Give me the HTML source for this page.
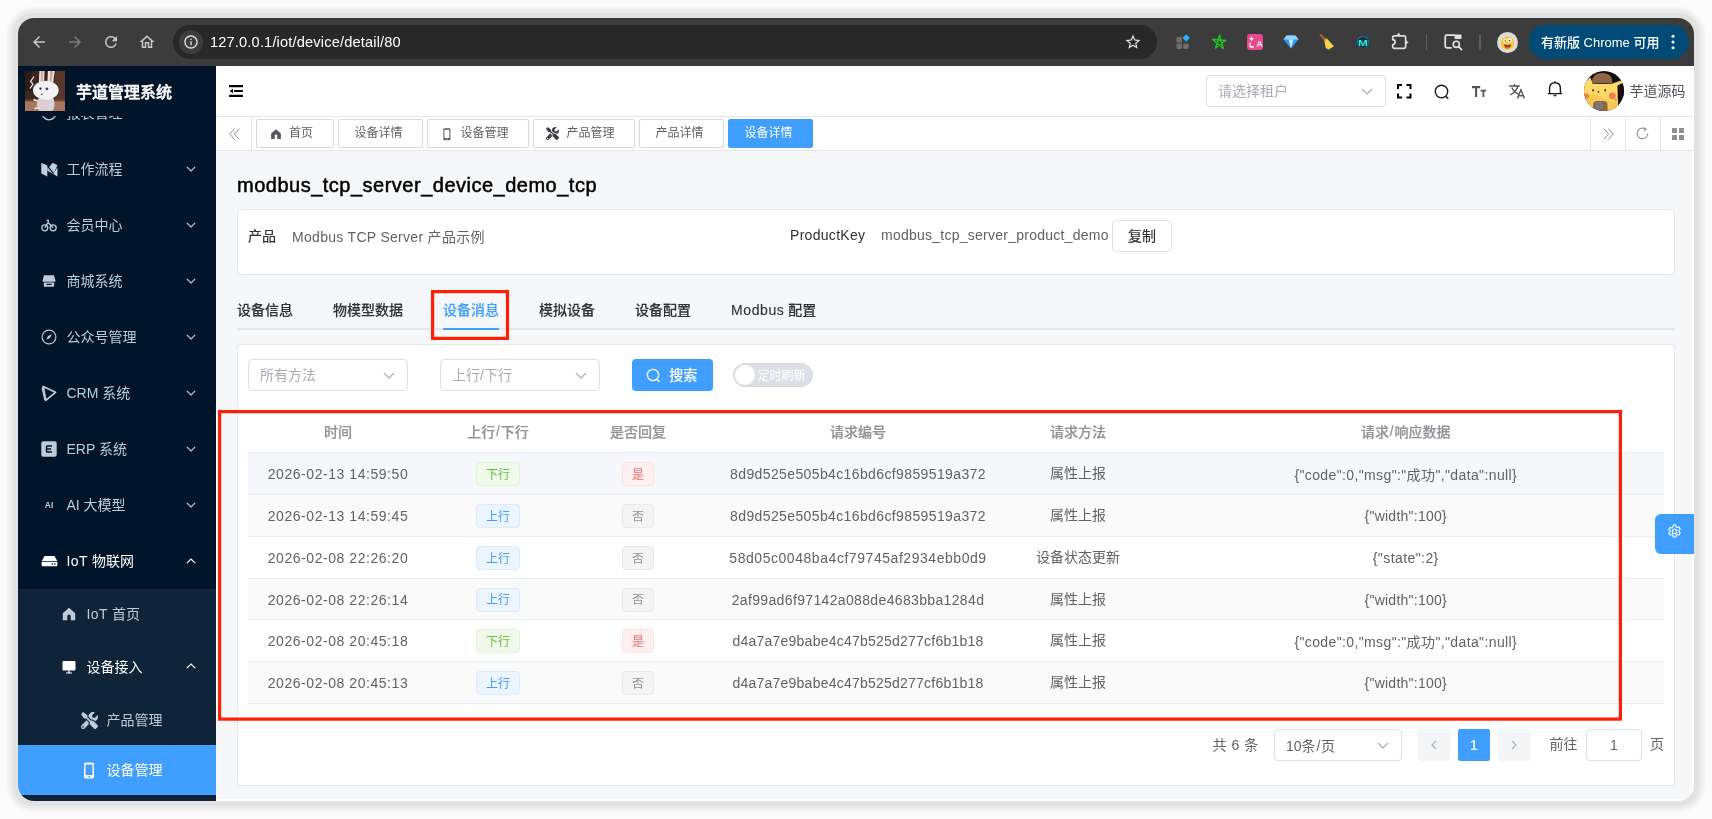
<!DOCTYPE html>
<html lang="zh-CN">
<head>
<meta charset="utf-8">
<title>芋道管理系统</title>
<style>
*{box-sizing:border-box;margin:0;padding:0}
html,body{width:1712px;height:819px;overflow:hidden;background:#fbfbfb}
body{font-family:"Liberation Sans","Noto Sans CJK SC",sans-serif;font-size:14px;color:#606266;position:relative}
.a{position:absolute}
.win{position:absolute;left:18.200px;top:18px;width:1675.400px;height:782.700px;border-radius:16px;overflow:hidden;background:#fff;
  box-shadow:0 0 1px 4.500px #e2e2e2,0 0 2px 7.500px #ebebeb,0 0 2px 11px #f3f3f3}
.o{position:absolute;left:-18.200px;top:-18px;width:1712px;height:819px;will-change:transform}
/* chrome toolbar */
.tb{left:18px;top:18px;width:1676px;height:48px;background:#3c3c3c}
.url{left:173px;top:25px;width:984px;height:34px;border-radius:17px;background:#282828}
.urlt{left:210px;top:25px;height:34px;line-height:34px;font-size:14.6px;color:#fff;white-space:nowrap;letter-spacing:.17px}
.pill{left:1529px;top:25px;width:160px;height:34px;border-radius:17px;background:#004a77}
.pillt{left:1541px;top:26px;height:34px;line-height:34px;font-size:13px;color:#fff;white-space:nowrap;font-weight:500}
svg{position:absolute;overflow:visible}
/* sidebar */
.sb{left:18px;top:66px;width:198.200px;height:735px;background:#001529}
.sub{left:18px;top:588.5px;width:198.200px;height:213px;background:#0f2438}
.act{left:18px;top:745px;width:198.200px;height:49.5px;background:#409eff}
.mi{left:66.5px;height:20px;line-height:20px;font-size:14px;color:#bfcbd9;white-space:nowrap}
.title{left:76px;top:80.500px;height:24px;line-height:24px;font-size:16px;font-weight:500;-webkit-text-stroke:.45px #fff;color:#fff;white-space:nowrap}
/* header */
.hd{left:216px;top:66px;width:1478px;height:51px;background:#fff;border-bottom:1px solid #e4e7ed}
.tv{left:216px;top:117px;width:1478px;height:34px;background:#fff;border-bottom:1px solid #e4e7ed}
.tag{top:119.200px;height:28.500px;border:1px solid #d9d9d9;border-radius:2px;background:#fff;font-size:12px;color:#606266;line-height:27.500px;white-space:nowrap}
.vs{width:1px;background:#e4e7ed;top:117px;height:33px}
.sel{border:1px solid #dcdfe6;border-radius:4px;background:#fff;height:32px;line-height:30px;font-size:14px;color:#a8abb2;padding-left:11px;white-space:nowrap}
/* content */
.card{background:#fff;border:1px solid #e4e7ed;border-radius:4px}
.t{white-space:nowrap;line-height:20px;height:20px}
.tab{top:300px;font-size:14px;font-weight:500;color:#303133;-webkit-text-stroke:.12px currentColor}
.row{left:248px;width:1415.5px;height:41.9px;border-bottom:1px solid #ebeef5}
.c{top:0;height:100%;display:flex;align-items:center;justify-content:center;white-space:nowrap;font-size:14px;color:#606266}
.th .c{color:#909399;font-weight:500;-webkit-text-stroke:.2px #909399}
.c.l{padding-top:1.500px}
.th .c,.row .c5{padding-bottom:3px}
.c .tg{margin-top:1px}
.c1{left:0;width:180px}.c2{left:180px;width:140px}.c3{left:320px;width:140px}.c4{left:460px;width:300px}.c5{left:760px;width:140px}.c6{left:900px;width:515.5px}
.tg{display:inline-block;height:24px;line-height:22px;padding:.700px 9px 0;font-size:12px;border-radius:4px;border:1px solid}
.tg.s{background:#f0f9eb;border-color:#e1f3d8;color:#67c23a}
.tg.p{background:#ecf5ff;border-color:#d9ecff;color:#409eff}
.tg.d{background:#fef0f0;border-color:#fde2e2;color:#f56c6c}
.tg.i{background:#f4f4f5;border-color:#e9e9eb;color:#909399}
.pb{top:729.300px;width:32px;height:31.700px;border-radius:2px;background:#f4f5f7;line-height:32px;text-align:center;font-size:14px}
</style>
</head>
<body>
<div class="win"><div class="o">
<div class="a" style="left:216px;top:151px;width:1476px;height:648.400px;background:#f5f7f9"></div>
<!--TOOLBAR-->
<div class="a tb"></div>
<svg style="left:30.25px;top:33.25px" width="18" height="18" viewBox="0 0 24 24"><path fill="#c7c7c7" d="M20 11H7.83l5.59-5.59L12 4l-8 8 8 8 1.41-1.41L7.83 13H20v-2z"/></svg>
<svg style="left:66.00px;top:33.25px" width="18" height="18" viewBox="0 0 24 24"><path fill="#7b7b7b" d="M12 4l-1.41 1.41L16.17 11H4v2h12.17l-5.58 5.59L12 20l8-8z"/></svg>
<svg style="left:102.00px;top:33.00px" width="18" height="18" viewBox="0 0 24 24"><path fill="#c7c7c7" d="M17.65 6.35C16.2 4.9 14.21 4 12 4c-4.42 0-7.99 3.58-7.99 8s3.57 8 7.99 8c3.73 0 6.84-2.55 7.73-6h-2.08c-.82 2.33-3.04 4-5.65 4-3.31 0-6-2.69-6-6s2.69-6 6-6c1.66 0 3.14.69 4.22 1.78L13 11h7V4l-2.35 2.35z"/></svg>
<svg style="left:138.00px;top:33.00px" width="18" height="18" viewBox="0 0 24 24"><path fill="#c7c7c7" d="M12 5.69l5 4.5V18h-2v-6H9v6H7v-7.81l5-4.5M12 3L2 12h3v8h6v-6h2v6h6v-8h3L12 3z"/></svg>
<div class="a url"></div>
<div class="a" style="left:178.5px;top:30px;width:24px;height:24px;border-radius:12px;background:#3d3d3d"></div>
<svg style="left:182.5px;top:34px" width="16" height="16" viewBox="0 0 24 24"><path fill="#e3e3e3" d="M11 7h2v2h-2zm0 4h2v6h-2zm1-9C6.48 2 2 6.48 2 12s4.48 10 10 10 10-4.48 10-10S17.52 2 12 2zm0 18c-4.41 0-8-3.59-8-8s3.59-8 8-8 8 3.59 8 8-3.590 8-8 8z"/></svg>
<div class="a urlt">127.0.0.1/iot/device/detail/80</div>
<svg style="left:1123.7px;top:33.2px" width="18" height="18" viewBox="0 0 24 24"><path fill="#e3e3e3" d="M22 9.24l-7.19-.62L12 2 9.19 8.63 2 9.24l5.46 4.73L5.820 21 12 17.270 18.180 21l-1.630-7.030L22 9.240zM12 15.400l-3.760 2.270 1-4.280-3.320-2.880 4.380-.38L12 6.100l1.710 4.040 4.380.38-3.320 2.880 1 4.280L12 15.400z"/></svg>
<!-- ext 1: squares -->
<svg style="left:1175.5px;top:34.5px" width="15" height="15" viewBox="0 0 15 15"><rect x="0.5" y="2" width="5.4" height="5.4" rx="1" fill="#6f6f6f"/><rect x="0.5" y="8.6" width="5.4" height="5.4" rx="1" fill="#6f6f6f"/><rect x="7.200" y="8.600" width="5.400" height="5.400" rx="1" fill="#6f6f6f"/><rect x="7.600" y="0.400" width="5.200" height="5.200" rx=".6" fill="#1fb6ff" transform="rotate(45 10.200 3)"/></svg>
<!-- ext 2: green star -->
<svg style="left:1211px;top:34px" width="16" height="16" viewBox="0 0 16 16"><path fill="none" stroke="#1ec31e" stroke-width="1.500" stroke-linejoin="round" d="M8.600 1.200 L4.500 14 L14.800 6.500 L1.500 5.200 L12.200 14.300 Z"/></svg>
<!-- ext 3: pink translate -->
<svg style="left:1246.800px;top:34px" width="16" height="16" viewBox="0 0 16 16"><rect width="16" height="16" rx="3" fill="#e9488b"/><text x="9.400" y="13" font-family="Liberation Sans,sans-serif" font-size="8.500" font-weight="700" fill="#fff">A</text><path d="M4.500 2.200l.8 1.800 1.800.8-1.800.8-.8 1.800-.8-1.800-1.800-.8 1.800-.8z" fill="#fff"/><path d="M3 8.500v3.200q0 1.300 1.300 1.300h2.500" stroke="#fff" stroke-width="1.300" fill="none"/></svg>
<!-- ext 4: diamond -->
<svg style="left:1282.700px;top:34px" width="16" height="16" viewBox="0 0 16 16"><path d="M3.500 1.500h9l3 4-7.500 9-7.500-9z" fill="#2b9bf0"/><path d="M3.500 1.500h9l3 4h-15z" fill="#8fd3ff"/><path d="M5.500 5.500h5l-2.500 9z" fill="#bfe6ff"/><path d="M8 14.500l-.6.800h1.200z" fill="#1c5fa8"/></svg>
<!-- ext 5: broom -->
<svg style="left:1318.700px;top:34px" width="16" height="16" viewBox="0 0 16 16"><path d="M1.500 1l5 5" stroke="#c9622b" stroke-width="1.800" stroke-linecap="round"/><path d="M5.200 6.200l2.600-1.600 7.200 7.600-5.200 3.300-3-1.300z" fill="#f3d34a"/><path d="M5 5.800l2.400-1.700 1.200 1.300-2.600 1.800z" fill="#d9a23a"/></svg>
<!-- ext 6: M -->
<svg style="left:1354.900px;top:34.400px" width="16" height="16" viewBox="0 0 16 16"><circle cx="8" cy="8" r="7.300" fill="none" stroke="#17405f" stroke-width="1" stroke-dasharray="3.500 2.200"/><circle cx="8" cy="8" r="6.300" fill="#2a5f8c"/><circle cx="8" cy="8.500" r="5.300" fill="#0f2c47"/><text transform="translate(8 11.500) scale(1.250 1)" x="0" y="0" text-anchor="middle" font-family="Liberation Sans,sans-serif" font-size="9.500" font-weight="700" fill="#1fffd0">M</text></svg>
<!-- ext 7: puzzle -->
<svg style="left:1391px;top:32px" width="18" height="18" viewBox="0 0 18 18"><path d="M3.400 3.900H12.900Q14.600 3.900 14.600 5.600V14.600Q14.600 16.300 12.900 16.300H3.400Q1.700 16.300 1.700 14.600V12.500A2.400 2.400 0 0 0 1.700 7.700V5.600Q1.700 3.900 3.400 3.900Z" fill="none" stroke="#dcdcdc" stroke-width="1.700" stroke-linejoin="round"/><path d="M5.300 3.900L7.200 1.300Q7.600.8 8 1.300L9.900 3.900z" fill="#dcdcdc"/><path d="M14.600 8.100L17.200 10Q17.700 10.400 17.200 10.800L14.600 12.700z" fill="#dcdcdc"/></svg>
<div class="a" style="left:1425.500px;top:34px;width:1.500px;height:16px;background:#5e5e5e;border-radius:1px"></div>
<!-- tab search -->
<svg style="left:1443.500px;top:33.500px" width="19" height="17" viewBox="0 0 19 17"><path d="M11 1.200H2.700Q1.200 1.200 1.200 2.700v9.600q0 1.500 1.500 1.500h5" fill="none" stroke="#e3e3e3" stroke-width="1.700"/><rect x="10.500" y="0.400" width="7" height="4.600" rx="1" fill="#e3e3e3"/><circle cx="12.300" cy="10.300" r="3.100" fill="none" stroke="#e3e3e3" stroke-width="1.600"/><path d="M14.600 12.700l3 3" stroke="#e3e3e3" stroke-width="1.700" stroke-linecap="round"/></svg>
<div class="a" style="left:1479px;top:34px;width:1.500px;height:16px;background:#5e5e5e;border-radius:1px"></div>
<!-- avatar -->
<svg style="left:1496.500px;top:31.500px" width="21" height="21" viewBox="0 0 21 21"><circle cx="10.500" cy="10.500" r="10.500" fill="#dcdcdc"/><circle cx="10.500" cy="11" r="6.800" fill="#f7c63a"/><ellipse cx="8" cy="8.800" rx="1.700" ry="1.900" fill="#fff"/><ellipse cx="12.600" cy="8.300" rx="2" ry="2.200" fill="#fff"/><circle cx="8.200" cy="9" r=".7" fill="#333"/><circle cx="12.600" cy="8.600" r=".8" fill="#333"/><path d="M6.800 12.300q3.700 1.200 7.400 0q-.8 4.200-3.700 4.200t-3.700-4.200z" fill="#9a3b1e"/><path d="M8.500 15.300q2-1.300 4 0q-2 1.800-4 0z" fill="#f0566a"/></svg>
<div class="a pill"></div>
<div class="a pillt">有新版 Chrome 可用</div>
<svg style="left:1670.800px;top:33px" width="4" height="18" viewBox="0 0 4 18"><circle cx="2" cy="3.200" r="1.500" fill="#fff"/><circle cx="2" cy="9" r="1.500" fill="#fff"/><circle cx="2" cy="14.800" r="1.500" fill="#fff"/></svg>
<!--/TOOLBAR-->
<!--SIDEBAR-->
<div class="a sb"></div>
<!-- cropped previous menu item -->
<div class="a" style="left:18px;top:115.500px;width:198px;height:6px;overflow:hidden">
  <svg style="left:22.500px;top:-11px" width="16" height="16" viewBox="0 0 16 16"><circle cx="8" cy="8" r="6.800" fill="none" stroke="#bfcbd9" stroke-width="1.300"/></svg>
  <div class="a mi" style="left:48.500px;top:-12.800px">报表管理</div>
</div>
<!-- logo -->
<svg style="left:25px;top:71px;overflow:hidden" width="40" height="40" viewBox="0 0 40 40"><defs><filter id="lb" x="-10%" y="-10%" width="120%" height="120%"><feGaussianBlur stdDeviation=".45"/></filter></defs><rect width="40" height="40" fill="#3b2520"/><g filter="url(#lb)"><rect x="-2" y="-2" width="44" height="32" fill="#3b2520"/><rect x="30" y="0" width="12" height="30" fill="#5a352a"/><rect x="-2" y="0" width="9" height="20" fill="#2a1a18"/><rect x="-2" y="29.500" width="44" height="13" fill="#a9775f"/><rect x="-2" y="28.500" width="44" height="2" fill="#6e4636"/><path d="M9 5.500L5.500 10.500 8 13 5 17.500" stroke="#e6e2e0" stroke-width="1.300" fill="none"/><path d="M13.700 13L14.500-1H19.500L19 13z" fill="#ece7e6"/><path d="M22.300 13L23-1H29.800L28 14z" fill="#ece7e6"/><path d="M15.600 11L16-1H18.200L17.800 11z" fill="#d9a595"/><path d="M24.500 11L25.200-1H28L26.800 11z" fill="#d9a595"/><ellipse cx="20.500" cy="33" rx="8.800" ry="9.500" fill="#e0cdcd"/><ellipse cx="25.500" cy="33" rx="4" ry="8" fill="#d8d4d6"/><ellipse cx="20.800" cy="19.300" rx="12.800" ry="9.600" fill="#f3f2f3"/><ellipse cx="15.300" cy="17.400" rx="2.300" ry="2.500" fill="#fff"/><ellipse cx="21.900" cy="17.500" rx="2.400" ry="2.600" fill="#fff"/><circle cx="15.400" cy="17.600" r="1.400" fill="#3d6796"/><circle cx="21.900" cy="17.700" r="1.500" fill="#3d6796"/><circle cx="15.500" cy="17.700" r=".6" fill="#1b2438"/><circle cx="22" cy="17.800" r=".7" fill="#1b2438"/><ellipse cx="16.700" cy="23.200" rx="1" ry=".8" fill="#6b3a2c"/><circle cx="16.300" cy="19.500" r=".6" fill="#f0a09a"/><path d="M8.500 28.500l4 1.500M9.500 37.500l5-1" stroke="#efecec" stroke-width="1.500" fill="none"/></g></svg>
<div class="a title">芋道管理系统</div>
<!-- menu items -->
<div class="a mi" style="top:159.300px">工作流程</div>
<div class="a mi" style="top:215.300px">会员中心</div>
<div class="a mi" style="top:271.300px">商城系统</div>
<div class="a mi" style="top:327.300px">公众号管理</div>
<div class="a mi" style="top:383.300px">CRM 系统</div>
<div class="a mi" style="top:439.300px">ERP 系统</div>
<div class="a mi" style="top:495.300px">AI 大模型</div>
<div class="a mi" style="top:551.300px;color:#fff"><span style="letter-spacing:.45px">IoT</span> 物联网</div>
<div class="a sub"></div>
<div class="a act"></div>
<div class="a mi" style="left:86.500px;top:603.800px"><span style="letter-spacing:.45px">IoT</span> 首页</div>
<div class="a mi" style="left:86.500px;top:656.800px;color:#fff">设备接入</div>
<div class="a mi" style="left:106.500px;top:710px">产品管理</div>
<div class="a mi" style="left:106.500px;top:759.800px;color:#fff">设备管理</div>
<!-- arrows -->
<svg style="left:186px;top:166.300px" width="10" height="6" viewBox="0 0 10 6"><path d="M.8.800L5 5l4.200-4.200" fill="none" stroke="#bfcbd9" stroke-width="1.200"/></svg>
<svg style="left:186px;top:222.300px" width="10" height="6" viewBox="0 0 10 6"><path d="M.8.800L5 5l4.200-4.200" fill="none" stroke="#bfcbd9" stroke-width="1.200"/></svg>
<svg style="left:186px;top:278.300px" width="10" height="6" viewBox="0 0 10 6"><path d="M.8.800L5 5l4.200-4.200" fill="none" stroke="#bfcbd9" stroke-width="1.200"/></svg>
<svg style="left:186px;top:334.300px" width="10" height="6" viewBox="0 0 10 6"><path d="M.8.800L5 5l4.200-4.200" fill="none" stroke="#bfcbd9" stroke-width="1.200"/></svg>
<svg style="left:186px;top:390.300px" width="10" height="6" viewBox="0 0 10 6"><path d="M.8.800L5 5l4.200-4.200" fill="none" stroke="#bfcbd9" stroke-width="1.200"/></svg>
<svg style="left:186px;top:446.300px" width="10" height="6" viewBox="0 0 10 6"><path d="M.8.800L5 5l4.200-4.200" fill="none" stroke="#bfcbd9" stroke-width="1.200"/></svg>
<svg style="left:186px;top:502.300px" width="10" height="6" viewBox="0 0 10 6"><path d="M.8.800L5 5l4.200-4.200" fill="none" stroke="#bfcbd9" stroke-width="1.200"/></svg>
<svg style="left:186px;top:557.800px" width="10" height="6" viewBox="0 0 10 6"><path d="M.8 5.200L5 1l4.200 4.200" fill="none" stroke="#fff" stroke-width="1.200"/></svg>
<svg style="left:186px;top:663.300px" width="10" height="6" viewBox="0 0 10 6"><path d="M.8 5.200L5 1l4.200 4.200" fill="none" stroke="#fff" stroke-width="1.200"/></svg>
<!-- icons -->
<!-- medium M -->
<svg style="left:40.540px;top:161.500px" width="17" height="16" viewBox="0 0 17 16"><path d="M.3.700L6.300 3.600V14.400L.3 11.500z" fill="#c3cfdc"/><path d="M6.300 4.850L12.300 11.900 6.300 9z" fill="#aebbc9"/><path d="M8.150 5.100L11.800.700 16.450 3.150 12.800 11z" fill="#c3cfdc"/><path d="M12.300 11.900L16.450 5.350V14.400z" fill="#cbd6e1"/></svg>
<!-- bicycle -->
<svg style="left:41px;top:217.300px" width="16" height="16" viewBox="0 0 16 16"><circle cx="3.800" cy="10.800" r="3" fill="none" stroke="#bfcbd9" stroke-width="1.300"/><circle cx="12.200" cy="10.800" r="3" fill="none" stroke="#bfcbd9" stroke-width="1.300"/><path d="M3.800 10.800L7 5.500l5.200 5.300M5.500 3.300h2L7 5.500" fill="none" stroke="#bfcbd9" stroke-width="1.300" stroke-linejoin="round"/></svg>
<!-- shop -->
<svg style="left:41px;top:273.300px" width="16" height="16" viewBox="0 0 16 16"><path d="M3 2.300h10l1.500 5.400q0 1-1 1H2.500q-1 0-1-1z" fill="#bfcbd9"/><path d="M2.800 9.600h10.400v3.200q0 .9-.9.900H3.700q-.9 0-.9-.9z" fill="#bfcbd9"/><rect x="5.300" y="10.800" width="5.400" height="1.200" fill="#001529"/></svg>
<!-- compass -->
<svg style="left:41px;top:329.300px" width="16" height="16" viewBox="0 0 16 16"><circle cx="8" cy="8" r="6.900" fill="none" stroke="#bfcbd9" stroke-width="1.200"/><path d="M10.800 5.200L9 9 5.200 10.800 7 7z" fill="#bfcbd9"/></svg>
<!-- civicrm -->
<svg style="left:41px;top:385px" width="16" height="17" viewBox="0 0 16 17"><path d="M2.300 1.600L14.500 7.300 4.800 15.300z" fill="none" stroke="#bfcbd9" stroke-width="1.700" stroke-linejoin="round"/><path d="M2.300 1.600L1.300 3.600l2.600 11.200.9.500" fill="none" stroke="#bfcbd9" stroke-width="1.300" stroke-linejoin="round"/></svg>
<!-- erp -->
<svg style="left:41px;top:441.300px" width="16" height="16" viewBox="0 0 16 16"><rect x=".3" y=".3" width="15.400" height="15.400" rx="2" fill="#bfcbd9"/><path d="M11 5H6.300Q5.500 5 5.500 5.800V10.200Q5.500 11 6.300 11H11M5.500 8H10" fill="none" stroke="#001529" stroke-width="1.500"/></svg>
<!-- AI -->
<svg style="left:41px;top:497.300px" width="16" height="16" viewBox="0 0 16 16"><text x="8" y="11.300" text-anchor="middle" font-family="Liberation Sans,sans-serif" font-size="8.500" font-weight="700" fill="#bfcbd9">AI</text></svg>
<!-- hdd -->
<svg style="left:40.500px;top:553.300px" width="17" height="16" viewBox="0 0 17 16"><path d="M3.600 3h9.800l3 5.200H.6z" fill="#fff"/><path d="M.6 9h15.800v3.200q0 1-1 1H1.600q-1 0-1-1z" fill="#fff"/><circle cx="11.300" cy="11.100" r=".8" fill="#001529"/><circle cx="13.800" cy="11.100" r=".8" fill="#001529"/></svg>
<!-- home -->
<svg style="left:61px;top:606px" width="16" height="16" viewBox="0 0 16 16"><path d="M8 1.800L1.800 7.200V14.200H6.300V10.200Q6.300 8.600 8 8.600T9.700 10.200V14.200H14.200V7.200z" fill="#bfcbd9"/></svg>
<!-- monitor -->
<svg style="left:61px;top:658.800px" width="16" height="16" viewBox="0 0 16 16"><rect x="1.500" y="2" width="13" height="9.400" rx="1" fill="#fff"/><path d="M7.300 11.400h1.400v2h2.300v1.200H5v-1.200h2.300z" fill="#fff"/></svg>
<!-- tools -->
<svg style="left:80.500px;top:711.500px" width="17" height="17" viewBox="0 0 512 512"><path fill="#bfcbd9" d="M501.1 395.7L384 278.6c-23.1-23.1-57.6-27.6-85.4-13.9L192 158.1V96L64 0 0 64l96 128h62.100l106.600 106.600c-13.600 27.800-9.200 62.300 13.900 85.400l117.100 117.100c14.600 14.600 38.200 14.600 52.700 0l52.700-52.700c14.500-14.600 14.500-38.200 0-52.700zM331.700 225c28.300 0 54.900 11 74.900 31l19.400 19.400c15.800-6.900 30.800-16.500 43.800-29.500 37.100-37.100 49.700-89.300 37.900-136.700-2.200-9-13.500-12.100-20.100-5.500l-74.400 74.400-67.900-11.300L334 98.900l74.400-74.400c6.600-6.600 3.400-17.900-5.700-20.200-47.400-11.700-99.600.9-136.600 37.900-28.500 28.500-41.900 66.100-41.200 103.600l82.100 82.100c8.100-1.900 16.500-2.900 24.700-2.900zm-103.900 82l-56.700-56.700L18.700 402.800c-25 25-25 65.500 0 90.500s65.500 25 90.500 0l123.600-123.600c-7.600-19.900-9.900-41.600-5-62.700zM64 472c-13.200 0-24-10.800-24-24 0-13.300 10.700-24 24-24s24 10.700 24 24c0 13.200-10.700 24-24 24z"/></svg>
<!-- mobile -->
<svg style="left:83px;top:761.500px" width="12" height="17" viewBox="0 0 12 17"><rect x="1" y=".5" width="10" height="16" rx="1.800" fill="#fff"/><rect x="2.500" y="2.500" width="7" height="10.500" fill="#409eff"/><rect x="4.700" y="14.200" width="2.600" height="1" rx=".5" fill="#409eff"/></svg>
<!--/SIDEBAR-->
<!--HEADER-->
<div class="a hd"></div>
<!-- fold icon -->
<svg style="left:229px;top:85px" width="14" height="12" viewBox="0 0 14 12"><rect x="0" y="0" width="14" height="2.200" rx=".6" fill="#000"/><rect x="5" y="4.900" width="9" height="2.200" rx=".6" fill="#000"/><rect x="0" y="9.800" width="14" height="2.200" rx=".6" fill="#000"/><path d="M4 3.800v4.400L.6 6z" fill="#000"/></svg>
<div class="a sel" style="left:1206px;top:75px;width:179.500px">请选择租户</div>
<svg style="left:1361px;top:87.500px" width="12" height="7" viewBox="0 0 12 7"><path d="M1 1l5 5 5-5" fill="none" stroke="#a8abb2" stroke-width="1.200"/></svg>
<!-- fullscreen -->
<svg style="left:1396.900px;top:84px" width="14.500" height="14.500" viewBox="0 0 14.500 14.500"><path d="M1 5V1h4M9.500 1h4v4M13.500 9.500v4h-4M5 13.500H1v-4" fill="none" stroke="#000" stroke-width="2"/></svg>
<!-- search -->
<svg style="left:1434px;top:83.500px" width="16" height="16" viewBox="0 0 16 16"><circle cx="7.500" cy="7.500" r="6.200" fill="none" stroke="#1a1a1a" stroke-width="1.400"/><path d="M11.800 12.300l2.400 2.400" stroke="#1a1a1a" stroke-width="1.500"/></svg>
<!-- Tt -->
<svg style="left:1471.500px;top:85.500px" width="15" height="11" viewBox="0 0 15 11"><path d="M0 1.100h8.200M4.100 1.100v9.900" stroke="#555" stroke-width="2.100" fill="none"/><path d="M8.600 4.700h5.600M11.400 4.700v6.300" stroke="#555" stroke-width="1.800" fill="none"/></svg>
<!-- translate -->
<svg style="left:1509px;top:84px" width="17" height="15" viewBox="0 0 17 15"><path d="M.3 2h10.400M5.500 0v2M9 2Q7.500 7.500 1.200 11M2.800 3.500Q4.800 8 9.600 10.300" fill="none" stroke="#555" stroke-width="1.300"/><path d="M8.400 14.600l3.500-8.800 3.500 8.800M9.700 11.800h4.400" fill="none" stroke="#555" stroke-width="1.400"/></svg>
<!-- bell -->
<svg style="left:1547px;top:80px" width="16" height="18" viewBox="0 0 16 18"><path d="M8 1.200v1.300M2.600 13.500V8.200Q2.600 2.800 8 2.800T13.400 8.200V13.500M.8 13.600h14.400" fill="none" stroke="#1a1a1a" stroke-width="1.400"/><path d="M6.600 15.300Q8 17 9.400 15.300z" fill="#1a1a1a" stroke="#1a1a1a" stroke-width=".8"/></svg>
<!-- avatar -->
<svg style="left:1583.800px;top:70.900px;overflow:hidden" width="40" height="40" viewBox="0 0 40 40"><defs><clipPath id="av"><circle cx="20" cy="20" r="20"/></clipPath><filter id="ab" x="-10%" y="-10%" width="120%" height="120%"><feGaussianBlur stdDeviation=".35"/></filter></defs><g clip-path="url(#av)"><rect width="40" height="40" fill="#120c08"/><g filter="url(#ab)"><path d="M-2 14L6.300 6.500 9 13 27 13 40 8.500 41 12 33.500 15.500 34 42-2 42z" fill="#fdd96a"/><path d="M33.500 14.500L41 11V26L36 27z" fill="#1a110a"/><path d="M31.500 28l4 1 1 13h-5z" fill="#2a1a0c"/><path d="M8 12.800Q7.500 2 18.200 2T28.400 12.800Q18 11.500 8 12.800z" fill="#8b6545"/><path d="M-2 25Q10 21 20 27T34 27V42H-2z" fill="#f9c852"/><circle cx="2.300" cy="24.900" r="2.700" fill="#f08048"/><circle cx="28.400" cy="24.900" r="3.400" fill="#f08048"/><ellipse cx="9.100" cy="19.300" rx=".9" ry="1.200" fill="#5a3514"/><ellipse cx="21.200" cy="19.300" rx=".9" ry="1.200" fill="#5a3514"/><ellipse cx="14.400" cy="20.900" rx="1" ry=".8" fill="#5a3514"/><path d="M9.100 34Q9.100 30.100 13 30.100H19.500Q23.500 30.100 23.500 34V42H9.100z" fill="#8b6545"/><rect x="11.200" y="31.200" width="7.700" height="6.800" rx=".8" fill="#77777c"/></g></g></svg>
<div class="a t" style="left:1629.500px;top:81px;color:#505358">芋道源码</div>
<!-- tags view -->
<div class="a tv"></div>
<svg style="left:228.700px;top:127.500px" width="11" height="12" viewBox="0 0 11 12"><path d="M5.500.5L.8 6l4.700 5.500M10.200.5L5.500 6l4.700 5.500" fill="none" stroke="#8d9095" stroke-width="1"/></svg>
<div class="a vs" style="left:251px"></div>
<div class="a tag" style="left:256px;width:78px"><span class="a" style="left:32px;top:0">首页</span></div>
<svg style="left:270px;top:127.500px" width="12" height="12" viewBox="0 0 16 16"><path d="M8 1.500L1.500 7.200V14.500H6.300V10.200Q6.300 8.600 8 8.600T9.700 10.200V14.500H14.500V7.200z" fill="#55585e"/></svg>
<div class="a tag" style="left:338px;width:84.500px;padding-left:15.500px">设备详情</div>
<div class="a tag" style="left:427px;width:101.500px"><span class="a" style="left:32.500px;top:0">设备管理</span></div>
<svg style="left:442.600px;top:127.600px" width="8" height="12.500" viewBox="0 0 8 12.500"><rect x=".4" y=".2" width="7" height="12" rx="1.300" fill="#55585e"/><rect x="1.400" y="1.800" width="5" height="8.200" fill="#fff"/><rect x="3.200" y="10.700" width="1.400" height=".8" fill="#fff"/></svg>
<div class="a tag" style="left:533px;width:101.500px"><span class="a" style="left:32.500px;top:0">产品管理</span></div>
<svg style="left:546px;top:127px" width="13" height="13" viewBox="0 0 512 512"><path fill="#3a3d42" d="M501.1 395.7L384 278.6c-23.1-23.1-57.6-27.6-85.4-13.9L192 158.1V96L64 0 0 64l96 128h62.100l106.600 106.600c-13.600 27.800-9.200 62.300 13.900 85.400l117.100 117.100c14.600 14.600 38.200 14.600 52.700 0l52.700-52.700c14.500-14.600 14.500-38.200 0-52.700zM331.700 225c28.300 0 54.900 11 74.900 31l19.400 19.400c15.800-6.900 30.800-16.500 43.800-29.500 37.100-37.100 49.700-89.300 37.900-136.700-2.200-9-13.500-12.100-20.100-5.500l-74.400 74.400-67.900-11.300L334 98.900l74.400-74.400c6.600-6.600 3.400-17.900-5.700-20.200-47.400-11.700-99.600.9-136.600 37.900-28.500 28.500-41.900 66.100-41.200 103.600l82.100 82.100c8.100-1.900 16.500-2.900 24.700-2.900zm-103.900 82l-56.700-56.700L18.700 402.800c-25 25-25 65.500 0 90.500s65.500 25 90.500 0l123.600-123.600c-7.600-19.900-9.900-41.600-5-62.700zM64 472c-13.200 0-24-10.800-24-24 0-13.300 10.700-24 24-24s24 10.700 24 24c0 13.200-10.700 24-24 24z"/></svg>
<div class="a tag" style="left:639px;width:84.500px;padding-left:15.500px">产品详情</div>
<div class="a tag" style="left:728px;width:84.500px;padding-left:15.500px;background:#409eff;border-color:#409eff;color:#fff">设备详情</div>
<div class="a vs" style="left:1590px"></div>
<div class="a vs" style="left:1625px"></div>
<div class="a vs" style="left:1660px"></div>
<svg style="left:1602.500px;top:127.500px" width="11" height="12" viewBox="0 0 11 12"><path d="M.8.500L5.500 6 .8 11.500M5.500.5L10.200 6l-4.700 5.500" fill="none" stroke="#8d9095" stroke-width="1"/></svg>
<svg style="left:1636px;top:127px" width="13" height="13" viewBox="0 0 13 13"><path d="M11.800 6.500A5.300 5.300 0 1 1 9.800 2.300" fill="none" stroke="#8d9095" stroke-width="1.100"/><path d="M8 .6l2.200 1.900-2.400 1.300" fill="none" stroke="#8d9095" stroke-width="1.100"/></svg>
<svg style="left:1671.500px;top:127.500px" width="12" height="12" viewBox="0 0 12 12"><rect x="0" y="0" width="5" height="5" rx=".5" fill="#8d9095"/><rect x="7" y="0" width="5" height="5" rx=".5" fill="#8d9095"/><rect x="0" y="7" width="5" height="5" rx=".5" fill="#8d9095"/><rect x="7" y="7" width="5" height="5" rx=".5" fill="#8d9095"/></svg>
<!--/HEADER-->
<!--CONTENT-->
<div class="a t" style="left:237px;top:172.300px;height:26px;line-height:26px;font-size:20px;color:#000;-webkit-text-stroke:.5px #000;letter-spacing:.5px">modbus_tcp_server_device_demo_tcp</div>
<div class="a card" style="left:237px;top:209px;width:1437.500px;height:65.500px"></div>
<div class="a t" style="left:248px;top:226px;color:#303133;-webkit-text-stroke:.2px #303133">产品</div>
<div class="a t" style="left:292px;top:226.500px;letter-spacing:.3px">Modbus TCP Server 产品示例</div>
<div class="a t" style="left:790px;top:224.500px;color:#303133;letter-spacing:.3px">ProductKey</div>
<div class="a t" style="left:881px;top:224.500px;letter-spacing:.25px">modbus_tcp_server_product_demo</div>
<div class="a" style="left:1112px;top:220px;width:60px;height:32px;border:1px solid #dcdfe6;border-radius:4px;background:#fff;line-height:30px;text-align:center;font-size:14px;color:#303133;-webkit-text-stroke:.15px #303133">复制</div>
<div class="a" style="left:237px;top:328px;width:1437.500px;height:2px;background:#e4e7ed"></div>
<div class="a t tab" style="left:237px">设备信息</div>
<div class="a t tab" style="left:333px">物模型数据</div>
<div class="a t tab" style="left:443px;color:#409eff">设备消息</div>
<div class="a t tab" style="left:539px">模拟设备</div>
<div class="a t tab" style="left:635px">设备配置</div>
<div class="a t tab" style="left:731px"><span style="letter-spacing:.6px">Modbus</span> 配置</div>
<div class="a" style="left:443px;top:328px;width:56px;height:2px;background:#409eff"></div>
<div class="a card" style="left:237px;top:344px;width:1437.500px;height:442px"></div>
<div class="a sel" style="left:248px;top:359px;width:160px">所有方法</div>
<svg style="left:383px;top:372px" width="12" height="7" viewBox="0 0 12 7"><path d="M1 1l5 5 5-5" fill="none" stroke="#a8abb2" stroke-width="1.200"/></svg>
<div class="a sel" style="left:440px;top:359px;width:160px">上行/下行</div>
<svg style="left:575px;top:372px" width="12" height="7" viewBox="0 0 12 7"><path d="M1 1l5 5 5-5" fill="none" stroke="#a8abb2" stroke-width="1.200"/></svg>
<div class="a" style="left:632px;top:359px;width:81px;height:32px;border-radius:4px;background:#409eff"></div>
<svg style="left:646px;top:367.500px" width="15" height="15" viewBox="0 0 16 16"><circle cx="7.500" cy="7.500" r="6" fill="none" stroke="#fff" stroke-width="1.400"/><path d="M11.800 12l2.600 2.600" stroke="#fff" stroke-width="1.500"/></svg>
<div class="a t" style="left:669.200px;top:365px;color:#fff;-webkit-text-stroke:.25px #fff">搜索</div>
<div class="a" style="left:733px;top:363px;width:80px;height:24px;border-radius:12px;background:#dcdfe6;border:1px solid #d6d9e0"></div>
<div class="a" style="left:734.600px;top:364.800px;width:20.400px;height:20.400px;border-radius:50%;background:#fff"></div>
<div class="a t" style="left:757.500px;top:365.500px;font-size:12px;color:#fff">定时刷新</div>
<div class="a row th" style="top:413px;height:40px"><div class="a c c1">时间</div><div class="a c c2">上行<span style="margin:0 .8px">/</span>下行</div><div class="a c c3">是否回复</div><div class="a c c4">请求编号</div><div class="a c c5">请求方法</div><div class="a c c6">请求<span style="margin:0 .8px">/</span>响应数据</div></div>
<div class="a row" style="top:453px;height:42px;background:#f5f7fa"><div class="a c c1 l" style="letter-spacing:0.55px">2026-02-13 14:59:50</div><div class="a c c2"><span class="tg s">下行</span></div><div class="a c c3"><span class="tg d">是</span></div><div class="a c c4 l" style="letter-spacing:0.38px">8d9d525e505b4c16bd6cf9859519a372</div><div class="a c c5">属性上报</div><div class="a c c6 l" style="letter-spacing:0.38px">{"code":0,"msg":"成功","data":null}</div></div>
<div class="a row" style="top:495px;height:42px;background:#fafafa"><div class="a c c1 l" style="letter-spacing:0.55px">2026-02-13 14:59:45</div><div class="a c c2"><span class="tg p">上行</span></div><div class="a c c3"><span class="tg i">否</span></div><div class="a c c4 l" style="letter-spacing:0.38px">8d9d525e505b4c16bd6cf9859519a372</div><div class="a c c5">属性上报</div><div class="a c c6 l" style="letter-spacing:0.25px">{"width":100}</div></div>
<div class="a row" style="top:537px;height:42px;background:#fff"><div class="a c c1 l" style="letter-spacing:0.55px">2026-02-08 22:26:20</div><div class="a c c2"><span class="tg p">上行</span></div><div class="a c c3"><span class="tg i">否</span></div><div class="a c c4 l" style="letter-spacing:0.55px">58d05c0048ba4cf79745af2934ebb0d9</div><div class="a c c5">设备状态更新</div><div class="a c c6 l" style="letter-spacing:0.42px">{"state":2}</div></div>
<div class="a row" style="top:579px;height:41px;background:#fafafa"><div class="a c c1 l" style="letter-spacing:0.55px">2026-02-08 22:26:14</div><div class="a c c2"><span class="tg p">上行</span></div><div class="a c c3"><span class="tg i">否</span></div><div class="a c c4 l" style="letter-spacing:0.35px">2af99ad6f97142a088de4683bba1284d</div><div class="a c c5">属性上报</div><div class="a c c6 l" style="letter-spacing:0.25px">{"width":100}</div></div>
<div class="a row" style="top:620px;height:42px;background:#fff"><div class="a c c1 l" style="letter-spacing:0.55px">2026-02-08 20:45:18</div><div class="a c c2"><span class="tg s">下行</span></div><div class="a c c3"><span class="tg d">是</span></div><div class="a c c4 l" style="letter-spacing:0.23px">d4a7a7e9babe4c47b525d277cf6b1b18</div><div class="a c c5">属性上报</div><div class="a c c6 l" style="letter-spacing:0.38px">{"code":0,"msg":"成功","data":null}</div></div>
<div class="a row" style="top:662px;height:42px;background:#fafafa"><div class="a c c1 l" style="letter-spacing:0.55px">2026-02-08 20:45:13</div><div class="a c c2"><span class="tg p">上行</span></div><div class="a c c3"><span class="tg i">否</span></div><div class="a c c4 l" style="letter-spacing:0.23px">d4a7a7e9babe4c47b525d277cf6b1b18</div><div class="a c c5">属性上报</div><div class="a c c6 l" style="letter-spacing:0.25px">{"width":100}</div></div>
<svg style="left:0;top:0" width="1712" height="819" viewBox="0 0 1712 819"><rect x="432.600" y="291.600" width="74.900" height="46.800" fill="none" stroke="#ff1f05" stroke-width="3.200"/><rect x="219.600" y="411.600" width="1400.800" height="307.500" fill="none" stroke="#ff1f05" stroke-width="3.200"/></svg>
<div class="a t" style="left:1212.500px;top:734.500px;letter-spacing:.55px">共 6 条</div>
<div class="a sel" style="left:1274px;top:729px;width:128px;color:#606266;padding-top:.6px">10条<span style="margin:0 .8px">/</span>页</div>
<svg style="left:1377px;top:742px" width="12" height="7" viewBox="0 0 12 7"><path d="M1 1l5 5 5-5" fill="none" stroke="#a8abb2" stroke-width="1.200"/></svg>
<div class="a pb" style="left:1418px"></div>
<svg style="left:1430.500px;top:740px" width="6" height="10" viewBox="0 0 6 10"><path d="M5 .8L1 5l4 4.200" fill="none" stroke="#a8abb2" stroke-width="1.100"/></svg>
<div class="a pb" style="left:1458px;background:#409eff;color:#fff;-webkit-text-stroke:.2px #fff">1</div>
<div class="a pb" style="left:1498px"></div>
<svg style="left:1511px;top:740px" width="6" height="10" viewBox="0 0 6 10"><path d="M1 .8L5 5 1 9.200" fill="none" stroke="#a8abb2" stroke-width="1.100"/></svg>
<div class="a t" style="left:1549.500px;top:734.300px">前往</div>
<div class="a sel" style="left:1586px;top:729px;width:56px;color:#606266;padding:0;text-align:center">1</div>
<div class="a t" style="left:1650px;top:734.300px">页</div>
<div class="a" style="left:1654.800px;top:514px;width:40px;height:40.300px;border-radius:6px 0 0 6px;background:#409eff"></div>
<svg style="left:1667.100px;top:524.400px" width="15" height="15" viewBox="0 0 15 15"><path d="M6.300 1h2.400l.4 1.700 1.300.75 1.650-.5 1.200 2.100-1.250 1.200v1.500l1.250 1.200-1.200 2.100-1.650-.5-1.300.75-.4 1.700H6.300l-.4-1.700-1.300-.75-1.650.5-1.200-2.100L3 8.250v-1.500L1.750 5.550l1.200-2.100 1.650.5 1.300-.75z" fill="none" stroke="#fff" stroke-width="1.100" stroke-linejoin="round"/><circle cx="7.500" cy="7.500" r="2.200" fill="none" stroke="#fff" stroke-width="1.100"/></svg>
<!--/CONTENT-->
</div></div>
</body>
</html>
